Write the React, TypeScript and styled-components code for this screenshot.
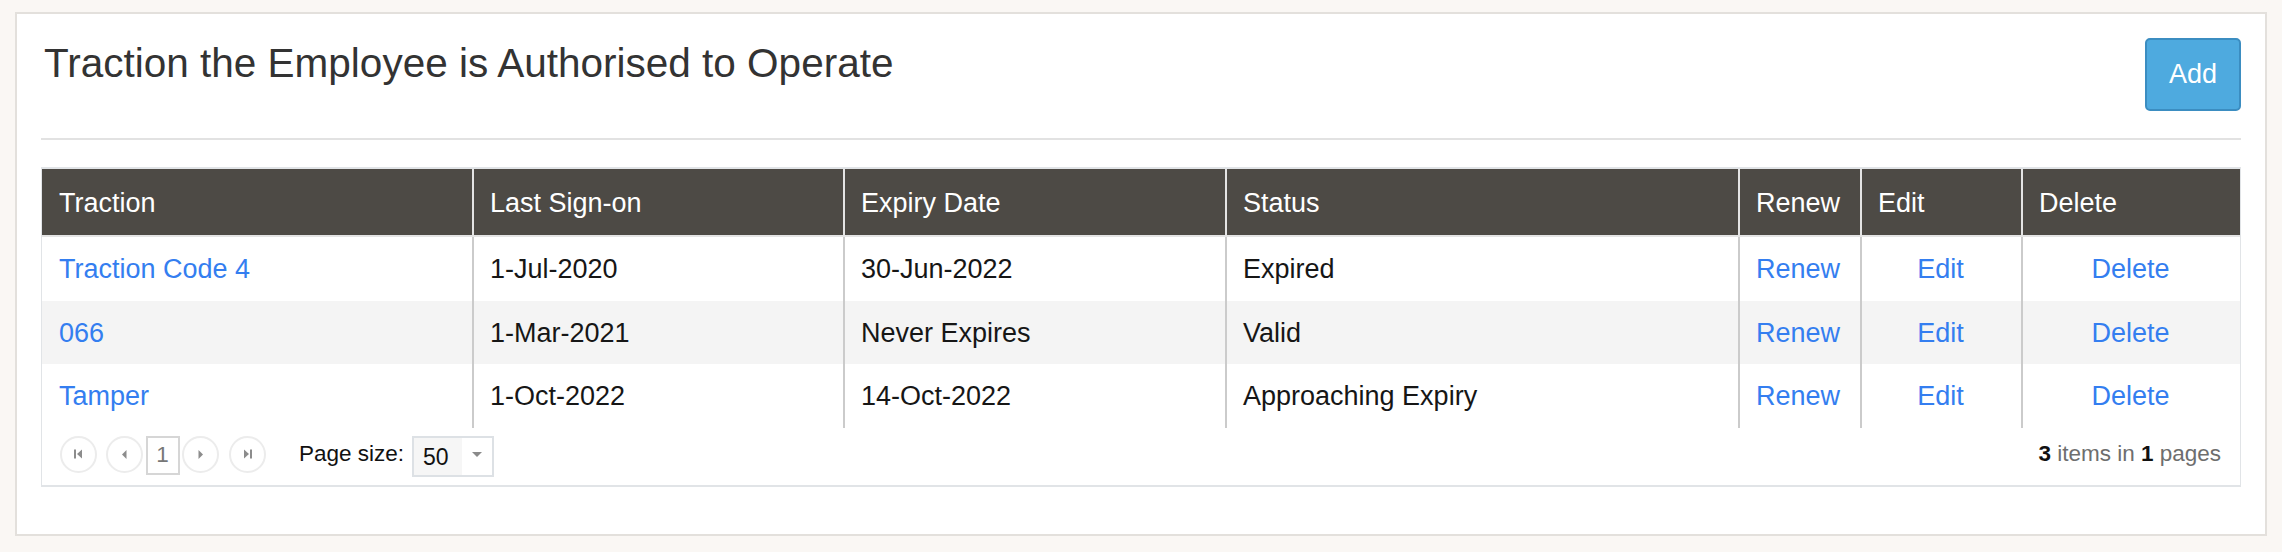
import React from "react";
import styled, { createGlobalStyle } from "styled-components";

const GlobalStyle = createGlobalStyle`
  html, body { margin: 0; padding: 0; background: #faf7f4; }
  body { font-family: "Liberation Sans", Arial, Helvetica, sans-serif; color: #1b1b1b; }
  * { box-sizing: border-box; }
`;

const Panel = styled.section`
  margin: 12px 15px 0;
  background: #fff;
  border: 2px solid #e3e0dc;
  padding: 24px 24px 47px 24px;
`;

const TitleBar = styled.header`
  display: flex;
  justify-content: space-between;
  align-items: flex-start;
`;

const Title = styled.h3`
  margin: 3px 0 0 3px;
  font-size: 40.5px;
  line-height: 44px;
  font-weight: 400;
  color: #333;
`;

const AddButton = styled.button`
  width: 96px;
  height: 73px;
  padding: 0;
  background: #4eaadf;
  border: 2px solid #3b8dc1;
  border-radius: 5px;
  color: #fff;
  font-family: inherit;
  font-size: 27px;
  cursor: pointer;
`;

const Rule = styled.div`
  margin-top: 27px;
  height: 2px;
  background: #e2e2e2;
`;

const GridFrame = styled.div`
  margin-top: 27px;
  border: 1px solid #e1e4e7;
  border-top-width: 2px;
  border-bottom-width: 2px;
  background: #fff;
`;

const Table = styled.table`
  width: 100%;
  border-collapse: separate;
  border-spacing: 0;
  table-layout: fixed;
`;

const Col = styled.col<{ $w: number }>`
  width: ${(p) => p.$w}px;
`;

const HeadCell = styled.th<{ $first?: boolean }>`
  background: #4d4a45;
  color: #fff;
  font-weight: 400;
  font-size: 27px;
  text-align: left;
  line-height: 64px;
  padding: 2px 18px 0 ${(p) => (p.$first ? 17 : 16)}px;
  border-left: ${(p) => (p.$first ? "none" : "2px solid #e4e4e4")};
  border-bottom: 2px solid #e4e4e4;
  white-space: nowrap;
  overflow: hidden;
`;

const BodyRow = styled.tr<{ $striped: boolean }>`
  background: ${(p) => (p.$striped ? "#f4f4f4" : "#fff")};
`;

const BodyCell = styled.td<{ $first?: boolean; $center?: boolean }>`
  font-size: 27px;
  line-height: 62.5px;
  padding: 1px 18px 0 ${(p) => (p.$first ? 17 : 16)}px;
  text-align: ${(p) => (p.$center ? "center" : "left")};
  border-left: ${(p) => (p.$first ? "none" : "2px solid #cbcbcb")};
  color: #161616;
  white-space: nowrap;
  overflow: hidden;
`;

const Link = styled.a`
  color: #347ef0;
  text-decoration: none;
  cursor: pointer;
`;

const Pager = styled.div`
  display: flex;
  align-items: flex-start;
  height: 57px;
  padding: 8px 19px 0 18px;
`;

const NavButton = styled.span<{ $ml?: number }>`
  width: 37px;
  height: 37px;
  margin-left: ${(p) => p.$ml ?? 0}px;
  border-radius: 50%;
  border: 2px solid #ececec;
  display: flex;
  align-items: center;
  justify-content: center;
  color: #8c8c8c;
  background: #fff;
`;

const PageNum = styled.span`
  width: 34px;
  height: 39px;
  margin-left: 2.5px;
  border: 2px solid #d6d6d6;
  display: flex;
  align-items: center;
  justify-content: center;
  font-size: 22.5px;
  color: #777;
`;

const SizeLabel = styled.span`
  margin-left: 33px;
  font-size: 22.5px;
  line-height: 35px;
  color: #111;
`;

const Select = styled.div`
  margin-left: 8px;
  width: 82px;
  height: 41px;
  border: 2px solid #dde1e5;
  display: flex;
`;

const SelectValue = styled.span`
  width: 48px;
  background: #f6f6f6;
  padding: 1px 0 0 9px;
  font-size: 23px;
  line-height: 36px;
  color: #111;
`;

const SelectArrow = styled.span`
  flex: 1;
  display: flex;
  align-items: center;
  justify-content: center;
  padding-bottom: 3px;
  color: #8a8a8a;
`;

const Info = styled.span`
  margin-left: auto;
  font-size: 22.5px;
  line-height: 35px;
  color: #6e6e6e;
  b {
    color: #111;
    font-weight: 700;
  }
`;

const FirstIcon = () => (
  <svg width="9" height="10" viewBox="0 0 9 10" fill="currentColor">
    <rect x="0" y="0.5" width="2" height="9" />
    <polygon points="8,0.5 3,5 8,9.5" />
  </svg>
);
const PrevIcon = () => (
  <svg width="5" height="9" viewBox="0 0 5 9" fill="currentColor">
    <polygon points="4.5,0 0,4.5 4.5,9" />
  </svg>
);
const NextIcon = () => (
  <svg width="5" height="9" viewBox="0 0 5 9" fill="currentColor">
    <polygon points="0.5,0 5,4.5 0.5,9" />
  </svg>
);
const LastIcon = () => (
  <svg width="9" height="10" viewBox="0 0 9 10" fill="currentColor">
    <polygon points="1,0.5 6,5 1,9.5" />
    <rect x="7" y="0.5" width="2" height="9" />
  </svg>
);
const DownArrow = () => (
  <svg width="10" height="5" viewBox="0 0 10 5" fill="currentColor">
    <polygon points="0,0 10,0 5,5" />
  </svg>
);

const columns = [
  { label: "Traction", w: 430 },
  { label: "Last Sign-on", w: 371 },
  { label: "Expiry Date", w: 382 },
  { label: "Status", w: 513 },
  { label: "Renew", w: 122 },
  { label: "Edit", w: 161 },
  { label: "Delete", w: 219 },
];

const rows = [
  { traction: "Traction Code 4", last: "1-Jul-2020", expiry: "30-Jun-2022", status: "Expired" },
  { traction: "066", last: "1-Mar-2021", expiry: "Never Expires", status: "Valid" },
  { traction: "Tamper", last: "1-Oct-2022", expiry: "14-Oct-2022", status: "Approaching Expiry" },
];

export default function App() {
  return (
    <>
      <GlobalStyle />
      <Panel>
        <TitleBar>
          <Title>Traction the Employee is Authorised to Operate</Title>
          <AddButton>Add</AddButton>
        </TitleBar>
        <Rule />
        <GridFrame>
          <Table>
            <colgroup>
              {columns.map((c) => (
                <Col key={c.label} $w={c.w} />
              ))}
            </colgroup>
            <thead>
              <tr>
                {columns.map((c, i) => (
                  <HeadCell key={c.label} $first={i === 0}>
                    {c.label}
                  </HeadCell>
                ))}
              </tr>
            </thead>
            <tbody>
              {rows.map((r, i) => (
                <BodyRow key={r.traction} $striped={i % 2 === 1}>
                  <BodyCell $first>
                    <Link>{r.traction}</Link>
                  </BodyCell>
                  <BodyCell>{r.last}</BodyCell>
                  <BodyCell>{r.expiry}</BodyCell>
                  <BodyCell>{r.status}</BodyCell>
                  <BodyCell>
                    <Link>Renew</Link>
                  </BodyCell>
                  <BodyCell $center>
                    <Link>Edit</Link>
                  </BodyCell>
                  <BodyCell $center>
                    <Link>Delete</Link>
                  </BodyCell>
                </BodyRow>
              ))}
            </tbody>
          </Table>
          <Pager>
            <NavButton>
              <FirstIcon />
            </NavButton>
            <NavButton $ml={9}>
              <PrevIcon />
            </NavButton>
            <PageNum>1</PageNum>
            <NavButton $ml={2.5}>
              <NextIcon />
            </NavButton>
            <NavButton $ml={10}>
              <LastIcon />
            </NavButton>
            <SizeLabel>Page size:</SizeLabel>
            <Select>
              <SelectValue>50</SelectValue>
              <SelectArrow>
                <DownArrow />
              </SelectArrow>
            </Select>
            <Info>
              <b>3</b> items in <b>1</b> pages
            </Info>
          </Pager>
        </GridFrame>
      </Panel>
    </>
  );
}
